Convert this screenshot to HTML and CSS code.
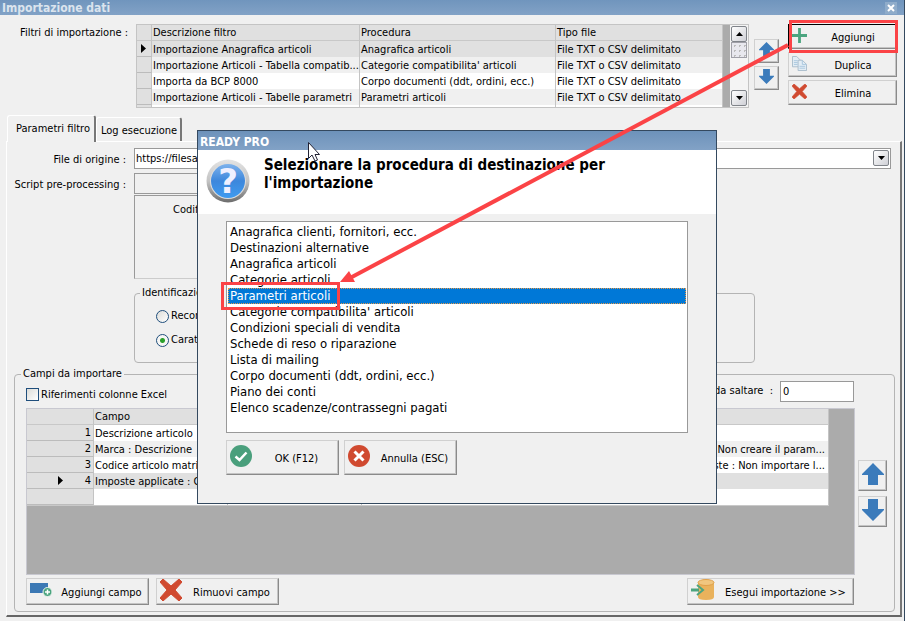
FILE: index.html
```html
<!DOCTYPE html>
<html lang="it">
<head>
    <meta charset="UTF-8">
    <meta name="viewport" content="width=device-width, initial-scale=1.0">
    <title>Importazione dati</title>
    <link rel="stylesheet" href="styles.css">
</head>
<body>
    <!-- Shared icons -->
    <svg class="icon-defs" width="0" height="0" aria-hidden="true">
        <symbol id="icon-up" viewBox="0 0 22 22">
            <path d="M11 0 L22 11 V12 H16 V22 H6 V12 H0 V11 Z" fill="#3b7bbb"/>
        </symbol>
        <symbol id="icon-down" viewBox="0 0 22 22">
            <path d="M11 22 L22 11 V10 H16 V0 H6 V10 H0 V11 Z" fill="#3b7bbb"/>
        </symbol>
        <symbol id="icon-cross" viewBox="0 0 22 22">
            <path d="M3 0 L11 7 L19 0 L22 3 L15 11 L22 19 L19 22 L11 15 L3 22 L0 19 L7 11 L0 3 Z" fill="#d04a30" stroke="#d04a30" stroke-linejoin="round"/>
        </symbol>
        <symbol id="icon-triangle" viewBox="0 0 7 4">
            <path d="M0 0 H7 L3.5 4 Z" fill="#000"/>
        </symbol>
    </svg>

    <div class="window">
        <div class="titlebar">
            <span>Importazione dati</span>
            <button class="close" aria-label="Chiudi">
                <svg width="8" height="8" viewBox="0 0 8 8"><path d="M1 1 L7 7 M7 1 L1 7" stroke="#fff" stroke-width="2"/></svg>
            </button>
        </div>

        <div class="filters">
            <span class="label">Filtri di importazione :</span>
            <div class="filter-grid">
                <table class="grid">
                    <colgroup><col class="col-mark"><col class="col-desc"><col class="col-proc"><col></colgroup>
                    <tr><th></th><th>Descrizione filtro</th><th>Procedura</th><th>Tipo file</th></tr>
                    <tr class="current"><td class="mark"><svg width="5" height="9" viewBox="0 0 5 9"><path d="M0 0 L5 4.5 L0 9 Z"/></svg></td><td>Importazione Anagrafica articoli</td><td>Anagrafica articoli</td><td>File TXT o CSV delimitato</td></tr>
                    <tr class="alt"><td class="mark"></td><td>Importazione Articoli - Tabella compatib...</td><td>Categorie compatibilita' articoli</td><td>File TXT o CSV delimitato</td></tr>
                    <tr><td class="mark"></td><td>Importa da BCP 8000</td><td>Corpo documenti (ddt, ordini, ecc.)</td><td>File TXT o CSV delimitato</td></tr>
                    <tr class="alt"><td class="mark"></td><td>Importazione Articoli - Tabelle parametri</td><td>Parametri articoli</td><td>File TXT o CSV delimitato</td></tr>
                    <tr><td class="mark"></td><td></td><td></td><td></td></tr>
                </table>
                <div class="scrollbar">
                    <button aria-label="Su"><svg class="flip" width="7" height="4"><use href="#icon-triangle"/></svg></button>
                    <span class="thumb"></span>
                    <button class="scroll-down" aria-label="Giu"><svg width="7" height="4"><use href="#icon-triangle"/></svg></button>
                </div>
            </div>
            <div class="order">
                <button class="btn" aria-label="Sposta su"><svg width="15" height="15"><use href="#icon-up"/></svg></button>
                <button class="btn" aria-label="Sposta giu"><svg width="15" height="15"><use href="#icon-down"/></svg></button>
            </div>
            <div class="actions">
                <button class="btn default">
                    <svg width="15" height="15" viewBox="0 0 16 16"><path d="M8 0 V16 M0 8 H16" stroke="#4ba47f" stroke-width="3"/></svg>
                    <span>Aggiungi</span>
                </button>
                <button class="btn">
                    <svg width="15" height="15" viewBox="0 0 16 16"><g fill="#e3edf5" stroke="#a9bccb"><path d="M0.500 0.500 H5 L8.500 4 V11.500 H0.500 Z"/><path d="M6.500 4.500 H11 L15.500 9 V15.500 H6.500 Z"/></g><path d="M11 4.500 V9 H15.500 M8 11 H14 M8 13 H14 M2 5 H6 M2 7 H6 M2 9 H6" fill="none" stroke="#a9c6de"/></svg>
                    <span>Duplica</span>
                </button>
                <button class="btn">
                    <svg width="15" height="15"><use href="#icon-cross"/></svg>
                    <span>Elimina</span>
                </button>
            </div>
        </div>

        <div class="tabs">
            <button class="tab active">Parametri filtro</button>
            <button class="tab">Log esecuzione</button>
        </div>

        <div class="panel">
            <div class="field">
                <label class="label" for="origin">File di origine :</label>
                <div class="combo">
                    <select id="origin"><option>https://filesa</option></select>
                    <span class="combo-arrow"><svg width="7" height="4"><use href="#icon-triangle"/></svg></span>
                </div>
            </div>
            <div class="field">
                <label class="label" for="script">Script pre-processing :</label>
                <input class="script" id="script" type="text">
            </div>
            <div class="encoding"><span>Codifica</span></div>

            <fieldset class="ident">
                <legend>Identificazione</legend>
                <label><input type="radio" name="ident"> Record</label>
                <label><input type="radio" name="ident" checked> Carattere</label>
            </fieldset>

            <fieldset class="import">
                <legend>Campi da importare</legend>
                <div class="options">
                    <label><input type="checkbox"> Riferimenti colonne Excel</label>
                    <label class="skip" for="skip">Righe da saltare &nbsp;:</label>
                    <input class="skip-value" id="skip" type="text" value="0">
                </div>
                <div class="import-main">
                    <div class="field-grid">
                        <table class="grid">
                            <colgroup><col class="col-num"><col class="col-campo"><col class="col-campo"><col></colgroup>
                            <tr><th></th><th>Campo</th><th></th><th></th></tr>
                            <tr><td class="mark">1</td><td>Descrizione articolo</td><td></td><td></td></tr>
                            <tr class="alt"><td class="mark">2</td><td>Marca : Descrizione</td><td></td><td class="note">Parametro inesistente : Non creare il param...</td></tr>
                            <tr><td class="mark">3</td><td>Codice articolo matrice</td><td></td><td class="note">Se imposte inesiste : Non importare l...</td></tr>
                            <tr class="current"><td class="mark"><svg width="5" height="9" viewBox="0 0 5 9"><path d="M0 0 L5 4.500 L0 9 Z"/></svg>4</td><td>Imposte applicate : Codice</td><td></td><td></td></tr>
                            <tr><td class="mark"></td><td></td><td></td><td></td></tr>
                        </table>
                    </div>
                    <div class="order large">
                        <button class="btn" aria-label="Campo su"><svg width="22" height="22"><use href="#icon-up"/></svg></button>
                        <button class="btn" aria-label="Campo giu"><svg width="22" height="22"><use href="#icon-down"/></svg></button>
                    </div>
                </div>
                <div class="import-buttons">
                    <button class="btn add">
                        <svg width="22" height="22" viewBox="0 0 22 22"><path d="M0 4 H18 V14 H0 Z" fill="#3b78b4"/><circle cx="17.500" cy="13" r="4.500" fill="#4ba47f" stroke="#eef4f0"/><path d="M17.500 10.500 V15.500 M15 13 H20" stroke="#fff" stroke-width="1.500"/></svg>
                        <span>Aggiungi campo</span>
                    </button>
                    <button class="btn remove">
                        <svg width="22" height="22"><use href="#icon-cross"/></svg>
                        <span>Rimuovi campo</span>
                    </button>
                    <button class="btn run">
                        <svg width="24" height="22" viewBox="0 0 24 22"><path d="M7 3 V18 Q7 21 15 21 Q23 21 23 18 V3 Z" fill="#e9b25c"/><ellipse cx="15" cy="3.500" rx="8" ry="3" fill="#f0c67f" stroke="#dfa04a"/><path d="M0 11 H8" stroke="#4ba47f" stroke-width="3"/><path d="M6 6 L12 11 L6 16" fill="none" stroke="#4ba47f" stroke-width="2"/></svg>
                        <span>Esegui importazione &gt;&gt;</span>
                    </button>
                </div>
            </fieldset>
        </div>
    </div>

    <div class="dialog" role="dialog" aria-labelledby="dialog-title">
        <div class="dialog-bar">READY PRO</div>
        <div class="dialog-head">
            <svg width="44" height="44" viewBox="0 0 44 44">
                <defs>
                    <linearGradient id="rim" x1="0" y1="0" x2="0" y2="1"><stop offset="0" stop-color="#e4e4e4"/><stop offset="0.5" stop-color="#c4c4c4"/><stop offset="1" stop-color="#6c6c6c"/></linearGradient>
                    <linearGradient id="ball" x1="0" y1="0" x2="0" y2="1"><stop offset="0" stop-color="#7eb2ec"/><stop offset="0.5" stop-color="#3d87dc"/><stop offset="1" stop-color="#3f9bf0"/></linearGradient>
                </defs>
                <circle cx="22" cy="22" r="21.500" fill="url(#rim)"/>
                <circle cx="22" cy="22" r="18" fill="#ddd"/>
                <circle cx="22" cy="22" r="17" fill="url(#ball)"/>
                <text x="22" y="34" class="question">?</text>
            </svg>
            <h1 id="dialog-title">Selezionare la procedura di destinazione per l'importazione</h1>
        </div>
        <div class="dialog-body">
            <select class="procedures" size="13" aria-label="Procedura di destinazione">
                <option>Anagrafica clienti, fornitori, ecc.</option>
                <option>Destinazioni alternative</option>
                <option>Anagrafica articoli</option>
                <option>Categorie articoli</option>
                <option selected>Parametri articoli</option>
                <option>Categorie compatibilita' articoli</option>
                <option>Condizioni speciali di vendita</option>
                <option>Schede di reso o riparazione</option>
                <option>Lista di mailing</option>
                <option>Corpo documenti (ddt, ordini, ecc.)</option>
                <option>Piano dei conti</option>
                <option>Elenco scadenze/contrassegni pagati</option>
            </select>
            <div class="dialog-buttons">
                <button class="btn">
                    <svg width="22" height="22" viewBox="0 0 22 22"><circle cx="11" cy="11" r="11" fill="#4a9f7c"/><path d="M5.500 11.500 L9.500 15 L16.500 7.500" fill="none" stroke="#fff" stroke-width="2.500"/></svg>
                    <span>OK (F12)</span>
                </button>
                <button class="btn">
                    <svg width="22" height="22" viewBox="0 0 22 22"><circle cx="11" cy="11" r="11" fill="#d04a30"/><path d="M6.500 6.500 L15.500 15.500 M15.500 6.500 L6.500 15.500" stroke="#fff" stroke-width="3"/></svg>
                    <span>Annulla (ESC)</span>
                </button>
            </div>
        </div>
    </div>

    <!-- Highlight boxes, arrow and mouse pointer -->
    <svg class="callout" width="905" height="621" viewBox="0 0 905 621" aria-hidden="true">
        <g fill="none" stroke="#fb4346" stroke-width="3">
            <rect x="790.500" y="21.500" width="106" height="30"/>
            <rect x="222.500" y="283.500" width="116" height="25"/>
            <path d="M788 45 L350 278" stroke-width="4"/>
        </g>
        <path d="M340 282 L349 271 L355 282 Z" fill="#fb4346"/>
        <path d="M308.500 142.500 V158.500 L312 155 L315 161 L317.500 160 L315 154.500 H319.500 Z" fill="#fff" stroke="#223"/>
    </svg>
</body>
</html>
```
FILE: styles.css
```css
* {
    box-sizing: border-box;
}

body {
    margin: 0;
    position: relative;
    font-family: "DejaVu Sans Condensed", "DejaVu Sans", sans-serif;
    font-size: 11px;
    line-height: 16px;
    color: #000;
    background-color: #f0f0f0;
}

button, input, select {
    font: inherit;
    color: inherit;
    border-radius: 0;
}

svg {
    display: block;
    flex: none;
}

.icon-defs {
    position: absolute;
}

.window {
    display: flex;
    flex-direction: column;
    min-height: 100vh;
    border-right: 1px solid #34495f;
    border-bottom: 1px solid #fff;
}

/* Title bar */
.titlebar {
    display: flex;
    align-items: center;
    justify-content: space-between;
    height: 15px;
    padding: 0 7px 0 2px;
    font-size: 12px;
    font-weight: bold;
    color: #dbe4ee;
    background: linear-gradient(#7095bd, #82a2c6);
}

.close {
    display: flex;
    align-items: center;
    justify-content: center;
    width: 12px;
    height: 12px;
    padding: 0;
    border: 0;
    background-color: #8facca;
}

/* Buttons */
.btn {
    display: flex;
    align-items: center;
    padding: 0 3px;
    border: 1px solid;
    border-color: #d0d0d0 #8a8a8a #8a8a8a #d0d0d0;
    background-color: #f0f0f0;
    box-shadow: inset -1px -1px #c4c4c4;
}

.btn svg {
    margin-bottom: 3px;
}

.btn span {
    flex: 1;
    padding: 2px 0 0 6px;
    text-align: center;
    white-space: nowrap;
}

.btn.default {
    border-top-color: #000;
    border-left-color: #000;
}

.label {
    text-align: right;
    white-space: nowrap;
}

/* Filter list */
.filters {
    display: flex;
    padding: 9px 7px 0 0;
}

.filters .label {
    width: 136px;
    padding: 1px 8px 0 0;
}

.filter-grid {
    display: flex;
    align-items: flex-start;
    flex: 1;
    height: 84px;
    overflow: hidden;
    border: 1px solid #c4c4c4;
    background-color: #ababab;
}

.grid {
    flex: 1;
    table-layout: fixed;
    border-collapse: separate;
    border-spacing: 0;
    background-color: #fff;
}

.grid th, .grid td {
    height: 16px;
    padding: 0 0 0 1px;
    overflow: hidden;
    font-weight: normal;
    line-height: 15px;
    text-align: left;
    white-space: nowrap;
    text-overflow: ellipsis;
    border-right: 1px solid #c4c4c4;
}

.grid th {
    background-color: #e0e0e0;
    border-bottom: 1px solid #c8c8c8;
}

.grid .mark {
    background-color: #e0e0e0;
    border-bottom: 1px solid #bcbcbc;
}

.grid .alt {
    background-color: #f0f0f0;
}

.grid .current {
    background-color: #e0e0e0;
}

.filter-grid .grid {
    width: 100%;
    margin-right: 7px;
}

.filter-grid .mark svg {
    margin-left: 3px;
}

.col-mark {
    width: 15px;
}

.col-desc {
    width: 208px;
}

.col-proc {
    width: 196px;
}

.scrollbar {
    display: flex;
    flex-direction: column;
    flex: none;
    width: 18px;
    height: 100%;
    padding: 1px;
    background-color: #f4f4f4;
}

.scrollbar button, .combo-arrow {
    display: flex;
    align-items: center;
    justify-content: center;
    width: 16px;
    height: 16px;
    padding: 0;
    border: 1px solid #80848a;
    border-radius: 2px;
    background: linear-gradient(135deg, #fff, #cfd0d6);
}

.flip {
    transform: scaleY(-1);
}

.thumb {
    height: 16px;
    border: 1px solid #a0a0a8;
    background: radial-gradient(circle, #bbb 1px, transparent 1px) 0 0 / 5px 5px, #e8e8ee;
}

.scrollbar .scroll-down {
    margin-top: auto;
}

.order {
    display: flex;
    flex-direction: column;
    gap: 3px;
    padding: 15px 9px 0 5px;
}

.order .btn {
    justify-content: center;
    width: 25px;
    height: 24px;
}

.actions {
    display: flex;
    flex-direction: column;
    gap: 3px;
    width: 109px;
}

.actions .btn {
    height: 25px;
}

/* Tabs */
.tabs {
    display: flex;
    align-items: flex-end;
    margin: 7px 0 0 7px;
}

.tab {
    height: 24px;
    padding: 2px 3px 0 4px;
    border: 1px solid #fff;
    border-right: 2px solid #777;
    border-bottom: 0;
    border-radius: 3px 3px 0 0;
    background-color: #f0f0f0;
}

.tab.active {
    height: 27px;
    padding: 0 4px 0 8px;
    margin-bottom: -1px;
    position: relative;
}

.panel {
    display: flex;
    flex-direction: column;
    flex: 1;
    margin: 0 2px 4px 6px;
    padding: 6px 5px 3px 7px;
    border: 1px solid #fff;
    border-right: 2px solid #777;
    border-bottom: 2px solid #666;
}

.field {
    display: flex;
    padding-right: 4px;
}

.field .label {
    width: 120px;
    padding: 4px 8px 0 0;
}

.field + .field {
    margin-top: 4px;
}

.combo {
    position: relative;
    flex: 1;
}

.combo select {
    display: block;
    width: 100%;
    height: 21px;
    padding: 0 1px;
    appearance: none;
    border: 1px solid #999;
    background-color: #fff;
}

.combo-arrow {
    position: absolute;
    top: 2px;
    right: 2px;
    pointer-events: none;
}

.script {
    width: 400px;
    height: 21px;
    border: 1px solid #999;
    background-color: #f0f0f0;
}

.encoding {
    width: 400px;
    height: 84px;
    margin: 1px 0 0 120px;
    padding: 6px 38px;
    border: 1px solid;
    border-color: #999 #ccc #ccc #999;
}

/* Group boxes */
fieldset {
    min-width: 0;
    margin: 0;
    padding: 0;
    border: 1px solid #b4b4b4;
    border-radius: 4px;
}

legend {
    margin-left: 5px;
    padding: 0 2px;
    line-height: 14px;
}

.ident {
    width: 621px;
    height: 77px;
    margin: 7px 0 0 120px;
    padding-top: 4px;
}

.ident label {
    display: flex;
    align-items: center;
    height: 24px;
    padding-left: 21px;
}

input[type="radio"], input[type="checkbox"] {
    width: 13px;
    height: 13px;
    margin: 0 2px 0 0;
    appearance: none;
    border: 1px solid #1f4e7c;
    background: linear-gradient(135deg, #dcdcd8, #fff);
}

input[type="radio"] {
    border-radius: 50%;
}

input[type="radio"]:checked {
    background: radial-gradient(circle, #2aa02a 2px, #f6f6f4 3px);
}

.import {
    margin-top: 4px;
    padding: 0 7px 6px 11px;
}

.import legend {
    margin-left: -5px;
}

.options {
    display: flex;
    align-items: center;
    height: 21px;
    margin-right: 33px;
}

.options label {
    display: flex;
    align-items: center;
    padding-top: 6px;
}

.options .skip {
    margin-left: auto;
    padding: 0 7px 2px 0;
}

.skip-value {
    width: 74px;
    height: 21px;
    padding: 0 2px;
    border: 1px solid #999;
    background-color: #fff;
}

.import-main {
    display: flex;
    margin-top: 6px;
}

.field-grid {
    flex: 1;
    min-height: 167px;
    padding-right: 25px;
    border: 1px solid #c8c8d0;
    background-color: #ababab;
}

.field-grid .grid {
    width: 100%;
    border-bottom: 1px solid #c8c8c8;
}

.field-grid .mark {
    padding-right: 2px;
    text-align: right;
}

.field-grid .mark svg {
    float: left;
    margin: 3px 0 0 30px;
}

.field-grid .note {
    padding-right: 3px;
    text-align: right;
}

.col-num {
    width: 67px;
}

.col-campo {
    width: 134px;
}

.order.large {
    gap: 5px;
    padding: 52px 0 0 3px;
}

.order.large .btn {
    width: 29px;
    height: 31px;
}

.import-buttons {
    display: flex;
    gap: 7px;
    margin: 3px 33px 0 0;
}

.import-buttons .btn {
    height: 27px;
}

.add, .remove {
    width: 123px;
}

.run {
    width: 167px;
    margin-left: auto;
}

/* Dialog */
.dialog {
    position: absolute;
    top: 130px;
    left: 197px;
    width: 520px;
    border: 1px solid #34495f;
    background-color: #f0f0f0;
}

.dialog-bar {
    height: 19px;
    padding: 3px 2px 0;
    font-size: 12px;
    font-weight: bold;
    color: #fff;
    background: linear-gradient(#6d92ba, #82a2c6);
}

.dialog-head {
    display: flex;
    gap: 14px;
    height: 64px;
    padding: 6px 100px 0 8px;
    background-color: #fff;
}

.dialog-head svg {
    margin-top: 3px;
}

.dialog h1 {
    margin: 0;
    font-size: 15px;
    line-height: 18px;
}

.question {
    font-family: "DejaVu Sans", sans-serif;
    font-size: 34px;
    font-weight: bold;
    fill: #f0f0ff;
    text-anchor: middle;
}

.dialog-body {
    padding: 7px 28px 28px;
}

.procedures {
    display: block;
    width: 100%;
    height: 212px;
    padding: 2px 1px;
    overflow: hidden;
    border: 1px solid #999;
    background-color: #fff;
    font-size: 13px;
}

.procedures option {
    height: 16px;
    min-height: 16px;
    padding: 0 2px;
    line-height: 16px;
}

.procedures option:checked {
    background: linear-gradient(#0078d7, #0078d7);
    -webkit-text-fill-color: #fff;
    outline: 1px dotted #e39a4c;
    outline-offset: -1px;
}

.dialog-buttons {
    display: flex;
    gap: 5px;
    margin-top: 7px;
}

.dialog-buttons .btn {
    width: 113px;
    height: 35px;
}

.callout {
    position: absolute;
    top: 0;
    left: 0;
    pointer-events: none;
}
```
